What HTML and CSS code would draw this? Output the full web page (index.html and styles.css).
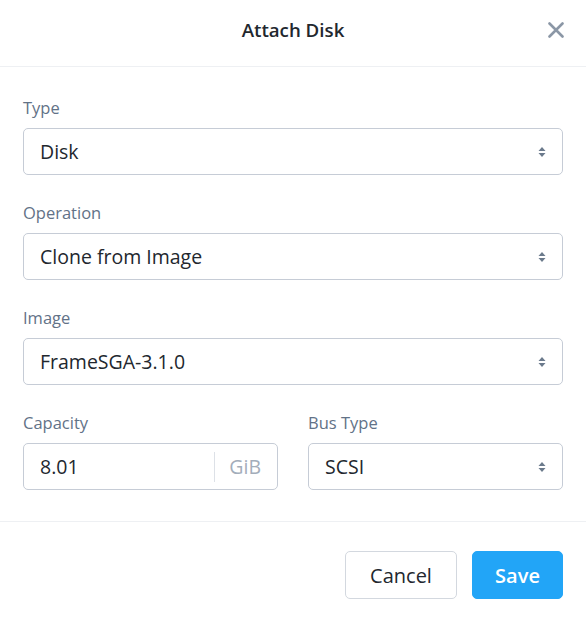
FILE: index.html
```html
<!DOCTYPE html>
<html>
<head>
<meta charset="utf-8">
<link rel="stylesheet" href="styles.css">
</head>
<body>
<div class="modal">
  <div class="modal-header">
    <div class="title">Attach Disk</div>
    <div class="close">
      <svg width="16" height="16" viewBox="0 0 16 16"><path d="M1.5 1.5 L14.5 14.5 M14.5 1.5 L1.5 14.5" stroke="#8b97a6" stroke-width="2.6" stroke-linecap="round"/></svg>
    </div>
  </div>
  <div class="modal-body">
    <div class="field">
      <div class="label">Type</div>
      <div class="select"><span>Disk</span><svg class="caret" width="8" height="12" viewBox="0 0 8 12"><path d="M4 1 L7.5 5 H0.5 Z M4 11 L7.5 7 H0.5 Z" fill="#6b7a8c"/></svg></div>
    </div>
    <div class="field">
      <div class="label">Operation</div>
      <div class="select"><span>Clone from Image</span><svg class="caret" width="8" height="12" viewBox="0 0 8 12"><path d="M4 1 L7.5 5 H0.5 Z M4 11 L7.5 7 H0.5 Z" fill="#6b7a8c"/></svg></div>
    </div>
    <div class="field">
      <div class="label">Image</div>
      <div class="select"><span>FrameSGA-3.1.0</span><svg class="caret" width="8" height="12" viewBox="0 0 8 12"><path d="M4 1 L7.5 5 H0.5 Z M4 11 L7.5 7 H0.5 Z" fill="#6b7a8c"/></svg></div>
    </div>
    <div class="row">
      <div class="field">
        <div class="label">Capacity</div>
        <div class="select input"><span class="value">8.01</span><span class="sep"></span><span class="unit">GiB</span></div>
      </div>
      <div class="field">
        <div class="label">Bus Type</div>
        <div class="select"><span>SCSI</span><svg class="caret" width="8" height="12" viewBox="0 0 8 12"><path d="M4 1 L7.5 5 H0.5 Z M4 11 L7.5 7 H0.5 Z" fill="#6b7a8c"/></svg></div>
      </div>
    </div>
  </div>
  <div class="modal-footer">
    <button class="btn btn-cancel">Cancel</button>
    <button class="btn btn-save">Save</button>
  </div>
</div>
</body>
</html>
```
FILE: styles.css
```css
html, body {
  margin: 0;
  padding: 0;
  background: #ffffff;
}
body {
  font-family: "Open Sans", "Lato", sans-serif;
  color: #22272e;
}
.modal {
  width: 586px;
  height: 619px;
  display: flex;
  flex-direction: column;
}
.modal-header {
  height: 67px;
  border-bottom: 1px solid #eef0f3;
  display: flex;
  align-items: center;
  justify-content: center;
  position: relative;
  box-sizing: border-box;
}
.title {
  font-size: 18.7px;
  line-height: 24px;
  font-weight: 600;
  color: #22272e;
  margin-top: -6px;
}
.close {
  position: absolute;
  right: 22px;
  top: 22px;
  width: 16px;
  height: 16px;
  display: flex;
}
.modal-body {
  padding: 31px 23px 31px 23px;
  display: flex;
  flex-direction: column;
  gap: 28px;
  border-bottom: 1px solid #eef0f3;
}
.field {
  display: flex;
  flex-direction: column;
}
.label {
  font-size: 16.5px;
  line-height: 20px;
  color: #627287;
  margin-bottom: 10px;
}
.select {
  height: 47px;
  box-sizing: border-box;
  border: 1px solid #c6ccd6;
  border-radius: 5px;
  display: flex;
  align-items: center;
  padding: 0 16px 0 16px;
  font-size: 19.5px;
  line-height: 24px;
  color: #22272e;
}
.select span:first-child {
  flex: 1;
}
.row {
  display: grid;
  grid-template-columns: 255px 255px;
  column-gap: 30px;
}
.input .value {
  flex: 1;
}
.sep {
  width: 1px;
  height: 30px;
  background: #dde1e7;
  margin-right: 14px;
}
.unit {
  color: #a3adba;
}
.modal-footer {
  display: flex;
  justify-content: flex-end;
  gap: 15px;
  padding: 29px 23px 0 0;
}
.btn {
  height: 48px;
  border-radius: 5px;
  font-family: "Open Sans", "Lato", sans-serif;
  font-size: 20px;
  padding: 0;
  cursor: pointer;
}
.btn-cancel {
  width: 112px;
  background: #ffffff;
  border: 1px solid #d3d8df;
  color: #22272e;
}
.btn-save {
  width: 91px;
  background: #22a5f7;
  border: 1px solid #22a5f7;
  color: #ffffff;
  font-weight: 600;
}
```
